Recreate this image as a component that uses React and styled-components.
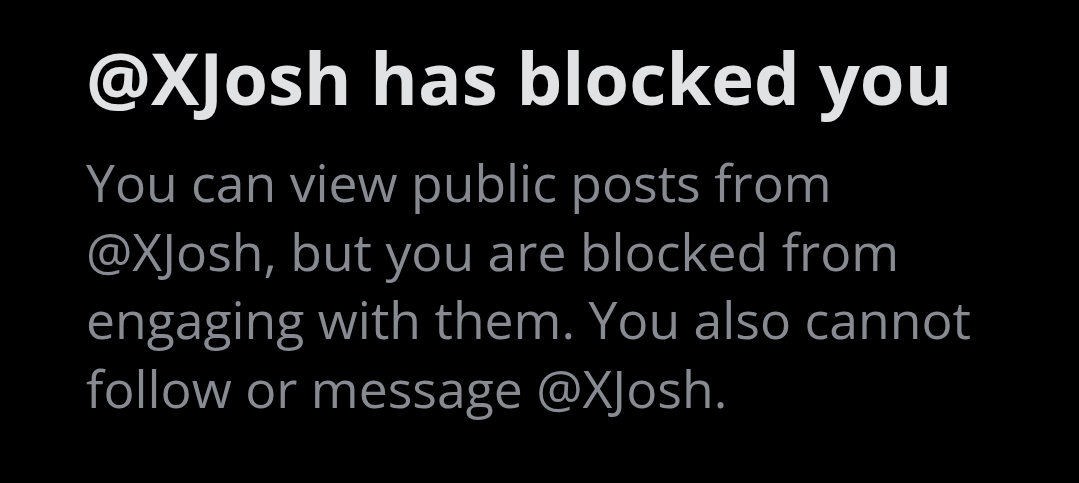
import styled, { createGlobalStyle } from "styled-components";

const GlobalStyle = createGlobalStyle`
  html, body {
    margin: 0;
    padding: 0;
    background: #000;
  }
`;

const Page = styled.div`
  width: 1079px;
  height: 483px;
  background: #000;
  box-sizing: border-box;
  padding: 33px 0 0 86px;
  display: flex;
  flex-direction: column;
  gap: 27px;
  font-family: "Open Sans", "Liberation Sans", sans-serif;
`;

const Title = styled.h1`
  margin: 0;
  font-size: 72.4px;
  line-height: 88px;
  font-weight: 700;
  color: #e1e2e3;
`;

const Body = styled.p`
  margin: 0;
  width: 960px;
  font-size: 51.7px;
  line-height: 68.5px;
  font-weight: 400;
  color: #878a90;
`;

export default function App() {
  return (
    <>
      <GlobalStyle />
      <Page>
        <Title>@XJosh has blocked you</Title>
        <Body>
          You can view public posts from
          <br />
          @XJosh, but you are blocked from
          <br />
          engaging with them. You also cannot
          <br />
          follow or message @XJosh.
        </Body>
      </Page>
    </>
  );
}
